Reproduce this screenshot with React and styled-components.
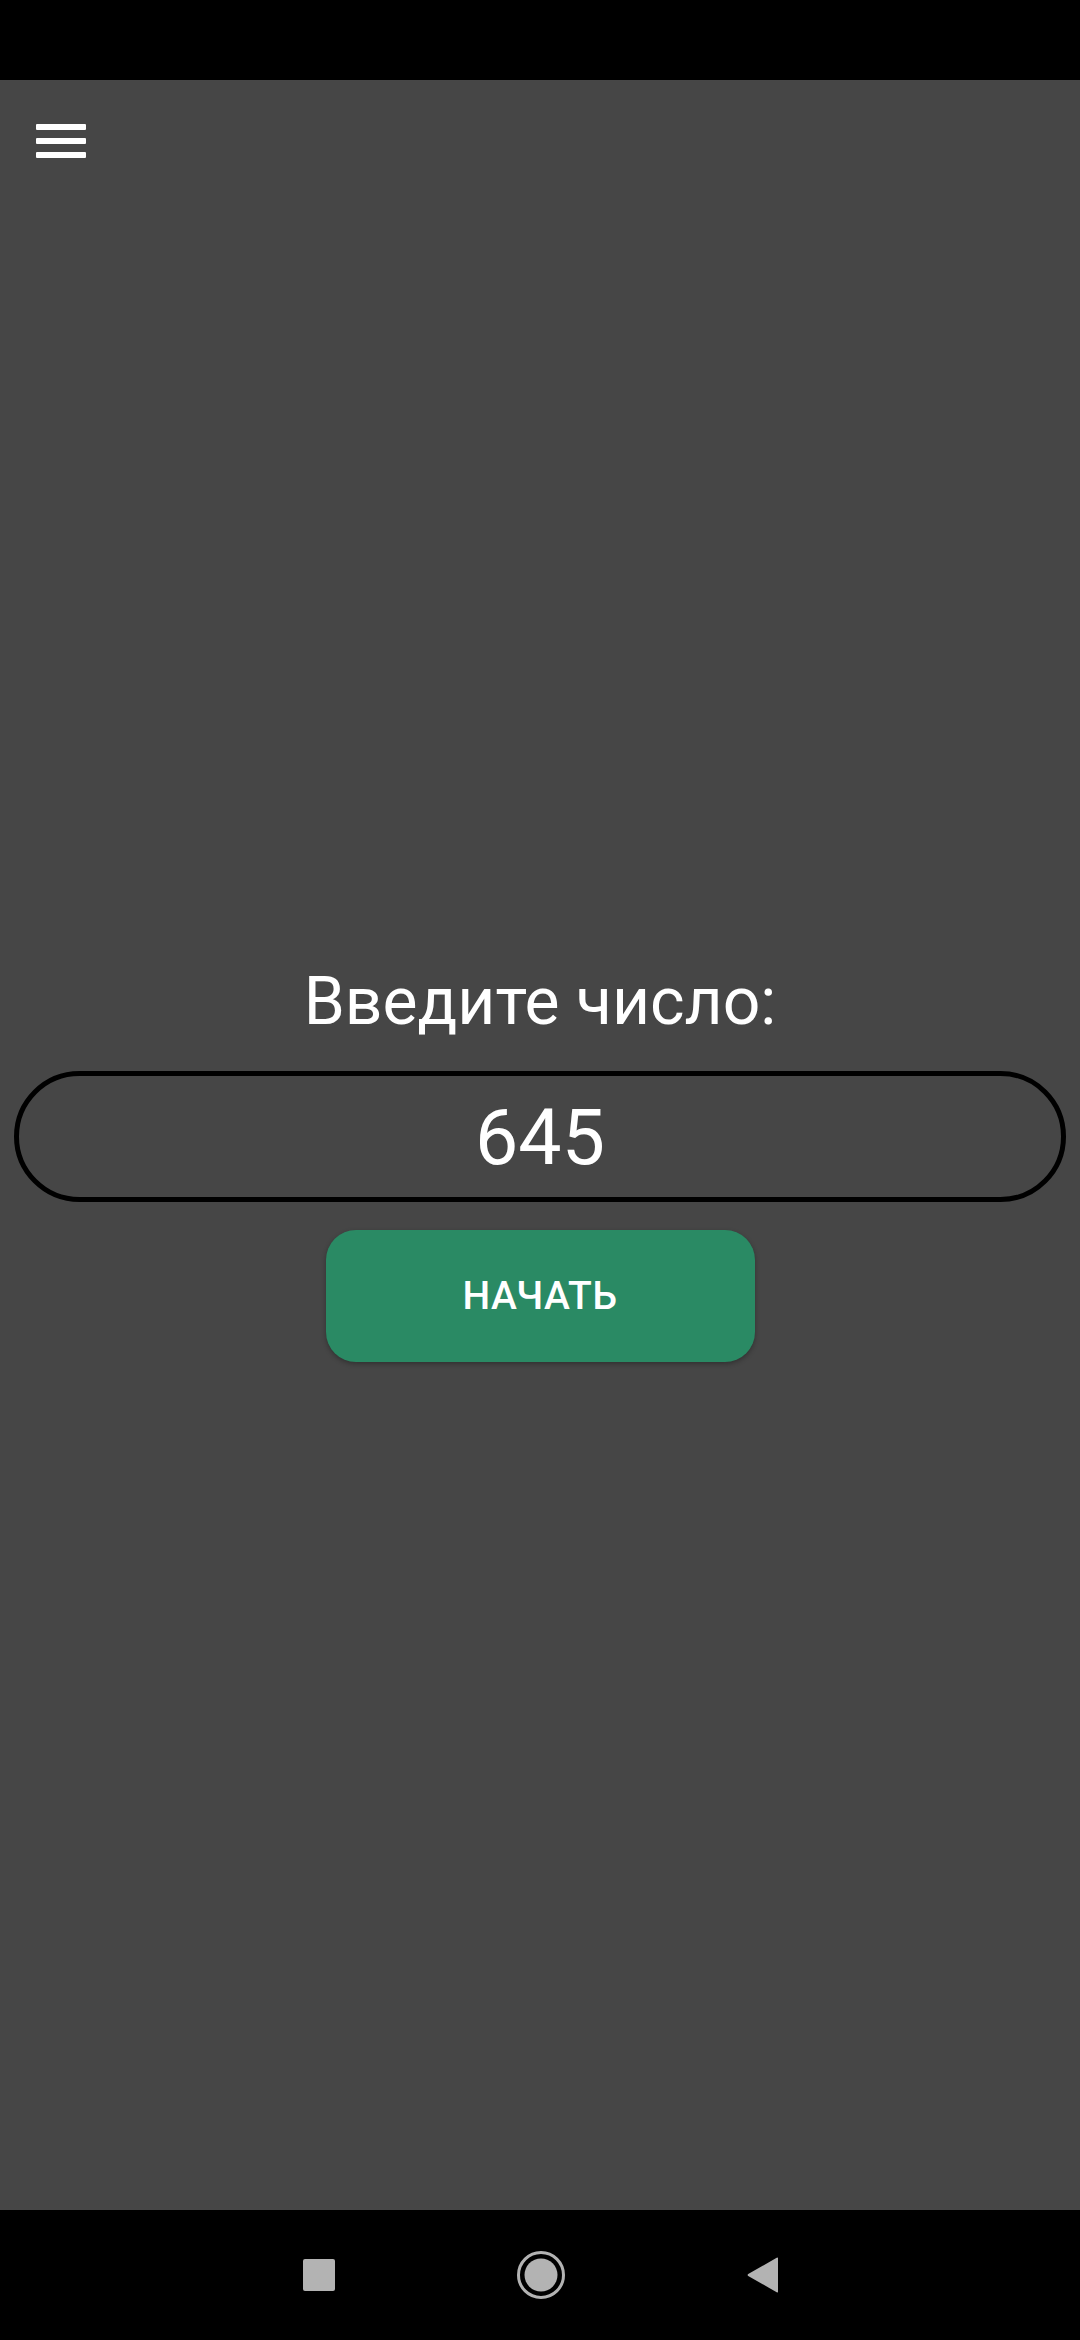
import React from "react";
import styled, { createGlobalStyle } from "styled-components";

const Global = createGlobalStyle`
  html, body { margin: 0; padding: 0; background: #464646; }
  body { font-family: Roboto, "Noto Sans", sans-serif; }
  * { box-sizing: border-box; }
`;

const Screen = styled.div`
  width: 1080px;
  height: 2340px;
  display: flex;
  flex-direction: column;
  background: #464646;
  overflow: hidden;
`;

const StatusBar = styled.div`
  height: 80px;
  flex: none;
  background: #000;
`;

const Main = styled.main`
  flex: 1;
  display: flex;
  flex-direction: column;
`;

const Header = styled.header`
  padding: 44px 0 0 36px;
  height: 120px;
  flex: none;
`;

const MenuButton = styled.div`
  width: 50px;
  display: flex;
  flex-direction: column;
  gap: 8px;
`;

const MenuBar = styled.span`
  display: block;
  height: 6px;
  background: #fff;
  border-radius: 1px;
`;

const Content = styled.section`
  padding: 763px 14px 0;
  display: flex;
  flex-direction: column;
  align-items: center;
`;

const Title = styled.h1`
  margin: 0;
  font-family: Roboto, sans-serif;
  font-weight: 400;
  font-size: 66px;
  line-height: 77px;
  color: #fff;
  text-align: center;
`;

const Field = styled.div`
  margin-top: 31px;
  width: 100%;
  height: 131px;
  border: 5px solid #000;
  border-radius: 66px;
  display: flex;
  align-items: center;
  justify-content: center;
  font-family: Roboto, sans-serif;
  font-size: 77px;
  color: #fff;
  padding-top: 2px;
`;

const StartButton = styled.button`
  margin-top: 28px;
  width: 429px;
  height: 132px;
  border: none;
  border-radius: 30px;
  background: #2a8a64;
  color: #fff;
  font-family: Roboto, sans-serif;
  font-weight: 500;
  font-size: 39px;
  letter-spacing: 0.5px;
  box-shadow: 0 2px 5px rgba(0, 0, 0, 0.3);
  display: flex;
  align-items: center;
  justify-content: center;
`;

const NavBar = styled.nav`
  height: 130px;
  flex: none;
  background: #000;
  display: grid;
  grid-template-columns: 48px 48px 48px;
  column-gap: 174px;
  justify-content: center;
  align-items: center;
  padding-left: 2px;
`;

const NavSlot = styled.div`
  display: flex;
  align-items: center;
  justify-content: center;
  height: 48px;
`;

export default function App() {
  return (
    <>
      <Global />
      <Screen>
        <StatusBar />
        <Main>
          <Header>
            <MenuButton>
              <MenuBar />
              <MenuBar />
              <MenuBar />
            </MenuButton>
          </Header>
          <Content>
            <Title>Введите число:</Title>
            <Field>645</Field>
            <StartButton>НАЧАТЬ</StartButton>
          </Content>
        </Main>
        <NavBar>
          <NavSlot>
            <svg width="32" height="32" viewBox="0 0 32 32">
              <rect x="0" y="0" width="32" height="32" rx="2" fill="#b3b3b3" />
            </svg>
          </NavSlot>
          <NavSlot>
            <svg width="48" height="48" viewBox="0 0 48 48">
              <circle cx="24" cy="24" r="22.5" fill="none" stroke="#b3b3b3" strokeWidth="3" />
              <circle cx="24" cy="24" r="16.5" fill="#b3b3b3" />
            </svg>
          </NavSlot>
          <NavSlot>
            <svg width="32" height="36" viewBox="0 0 32 36">
              <path d="M31 1.5 L31 34.5 Q31 36 29.7 35.2 L1.2 19 Q0 18 1.2 17 L29.7 0.8 Q31 0 31 1.5 Z" fill="#b3b3b3" />
            </svg>
          </NavSlot>
        </NavBar>
      </Screen>
    </>
  );
}
